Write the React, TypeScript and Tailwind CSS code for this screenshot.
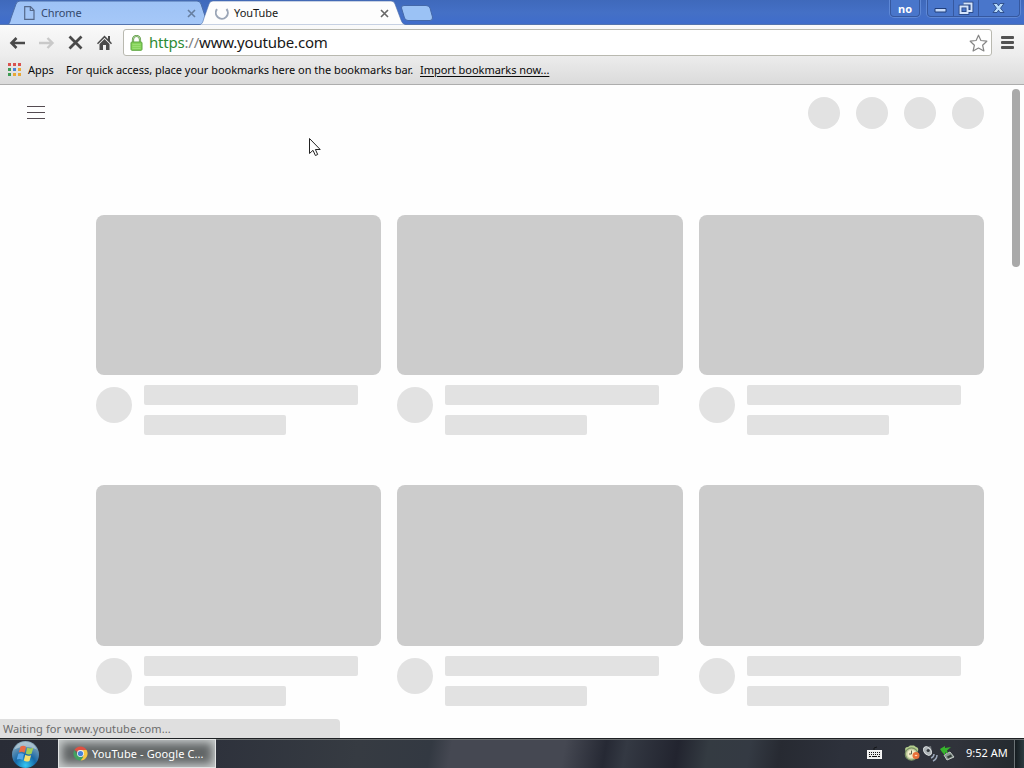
import type { ReactNode } from 'react'

const bookmarksHint = 'For quick access, place your bookmarks here on the bookmarks bar.'

const appDots = [
  'bg-[#d9534f]', 'bg-[#d9534f]', 'bg-[#d9534f]',
  'bg-[#3f9b54]', 'bg-[#4a82d8]', 'bg-[#e8a838]',
  'bg-[#3f9b54]', 'bg-[#e8a838]', 'bg-[#e8a838]',
]

function CloseIcon({ className }: { className: string }) {
  return (
    <svg width="9" height="9" viewBox="0 0 9 9" className={className}>
      <path d="M1 1l7 7M8 1l-7 7" stroke="currentColor" strokeWidth="1.600" fill="none" />
    </svg>
  )
}

function TabStrip() {
  return (
    <div className="relative flex h-[25px] shrink-0 bg-linear-to-b from-[#3f69bb] via-[#4470c6] to-[#3f6ccb]">
      <svg width="1024" height="25" viewBox="0 0 1024 25" className="absolute left-0 top-0">
        <defs>
          <linearGradient id="idle" x1="0" y1="0" x2="0" y2="1">
            <stop offset="0" stopColor="#9dc2f5" />
            <stop offset="1" stopColor="#a6c8f8" />
          </linearGradient>
        </defs>
        <path d="M7 25C10 24 10 21 11 18L16 4Q17 1 20 1H197Q200 1 201 4L208 25Z" fill="url(#idle)" stroke="#4b6da8" strokeWidth="1" />
        <path d="M0 24.5H1024" stroke="#5474ae" />
        <path d="M199 25C203 24 203 21 204 18L209 4Q210 1 213 1H391Q394 1 395 4L401 20Q402 24 406 25Z" fill="#fdfdfd" stroke="#4b6da8" strokeWidth=".6" />
        <path d="M401.500 8Q401 5.500 404 5.500H426Q429 5.500 430 8L432.500 17Q433 20.500 430 20.500H408Q405.500 20.500 404.500 18Z" fill="#9bc2f5" stroke="#4468a9" />
      </svg>

      <div className="relative flex w-[204px] items-center pl-[24px] pr-[8px] pt-px">
        <svg width="11" height="14" viewBox="0 0 11 14">
          <path d="M.7.7h5.800L10 4.300v9H.7zM6.300.7v3.800H10" fill="none" stroke="#55698b" strokeWidth="1.200" />
        </svg>
        <span className="ml-[6px] flex-1 text-[11px] tracking-[-0.1px] text-[#34496c]">Chrome</span>
        <CloseIcon className="text-[#667e9f]" />
      </div>
      <div className="relative flex w-[197px] items-center pl-[11px] pr-[12px] pt-px">
        <svg width="14" height="14" viewBox="0 0 14 14">
          <path d="M2 3.200A6 6 0 1 0 11.500 3" fill="none" stroke="#9ba6b7" strokeWidth="2" />
        </svg>
        <span className="ml-[5px] flex-1 text-[11px] tracking-[-0.03px] text-[#181818]">YouTube</span>
        <CloseIcon className="text-[#666]" />
      </div>

      <div className="relative ml-auto mr-[4px] flex h-[17px] text-white">
        <div className="mr-[7px] flex w-[30px] items-center justify-center rounded-b-[4px] border border-t-0 border-[#36589f] bg-[#4976cb] pt-px text-[11px] font-bold leading-none shadow-[0_0_0_1px_#5e88d6]">no</div>
        <div className="flex w-[93px] rounded-b-[4px] border border-t-0 border-[#36589f] bg-[#4976cb] shadow-[0_0_0_1px_#5e88d6]">
          <WindowButton className="w-[25px]">
            <path d="M7 8.500h11v3.500h-11z" fill="#c8dcfb" stroke="#213f7b" />
          </WindowButton>
          <WindowButton className="w-[26px] border-x border-[#36589f]">
            <path d="M9.500 3.500h8v7.500h-3M6.500 6.500h7v6.500h-7z" fill="none" stroke="#213f7b" strokeWidth="3.600" />
            <path d="M9.500 3.500h8v7.500h-3M6.500 6.500h7v6.500h-7z" fill="none" stroke="#d4e4fc" strokeWidth="2" />
          </WindowButton>
          <WindowButton className="w-[40px]">
            <path d="M14 3.500h4l1.500 2.300L21 3.500h4l-3.500 4.700L25 12.500h-4l-1.500-2.300L18 12.500h-4l3.500-4.300z" fill="#b9dcfb" stroke="#213f7b" strokeWidth=".8" />
          </WindowButton>
        </div>
      </div>
    </div>
  )
}

function WindowButton({ className, children }: { className: string; children: ReactNode }) {
  return (
    <div className={className}>
      <svg width="100%" height="16">{children}</svg>
    </div>
  )
}

function Toolbar() {
  return (
    <div className="flex h-[34px] shrink-0 items-center pl-[9px] pr-[10px] pt-px">
      <svg width="17" height="14" viewBox="0 0 17 14" className="text-[#4a4a4a]">
        <path d="M7.500 2L2.500 7l5 5M3 7h13" fill="none" stroke="currentColor" strokeWidth="2.600" />
      </svg>
      <svg width="17" height="14" viewBox="0 0 17 14" className="ml-[12px] text-[#c9c9c9]">
        <path d="M9.500 2l5 5-5 5M14 7H1" fill="none" stroke="currentColor" strokeWidth="2.400" />
      </svg>
      <svg width="15" height="15" viewBox="0 0 15 15" className="ml-[13px] text-[#4a4a4a]">
        <path d="M1.500 1.500l12 12M13.500 1.500l-12 12" fill="none" stroke="currentColor" strokeWidth="2.800" />
      </svg>
      <svg width="15" height="15" viewBox="0 0 15 15" className="ml-[14px] text-[#4a4a4a]">
        <path d="M7.500.5L11 4V1h2v5l2 2.200-1 1-6.500-6.500L1 9.200l-1-1z" fill="currentColor" />
        <path d="M2.500 9l5-5 5 5v6H9v-5H6v5H2.500z" fill="currentColor" />
      </svg>
      <div className="ml-[11px] flex h-[27px] w-[869px] shrink-0 items-center rounded-[3px] border border-[#b9b9b0] bg-white pl-[6px] pr-[3px]">
        <svg width="13" height="16" viewBox="0 0 13 16">
          <path d="M3 7.500V4.500a3.500 3.500 0 0 1 7 0v3" fill="none" stroke="#5f9b45" strokeWidth="2.200" />
          <path d="M3 7.500V4.500a3.500 3.500 0 0 1 7 0v3" fill="none" stroke="#c3dfb5" strokeWidth=".7" />
          <rect x="1" y="7" width="11" height="8.300" rx="1" fill="#86d45a" stroke="#5da640" />
          <path d="M2.500 9.500h8M2.500 11.500h8M2.500 13.500h8" stroke="#a3e37f" strokeWidth=".7" />
        </svg>
        <div className="ml-[6px] flex-1 whitespace-pre text-[15px] leading-none tracking-[-0.2px] text-[#181818]">
          <span className="text-[#2e8b35]">https</span>
          <span className="text-[#808080]">://</span>www.youtube.com
        </div>
        <svg width="19" height="18" viewBox="0 0 19 18">
          <path d="M9.500 1.200l2.400 5.300 5.900.7-4.200 4 1.300 5.800-5.400-3-5.400 3 1.300-5.800-4.200-4 5.900-.7z" fill="#fff" stroke="#858585" strokeWidth="1.200" strokeLinejoin="round" />
        </svg>
      </div>
      <div className="ml-auto flex flex-col gap-[2px]">
        <div className="h-[3px] w-[13px] rounded-[1px] bg-[#525252]" />
        <div className="h-[3px] w-[13px] rounded-[1px] bg-[#525252]" />
        <div className="h-[3px] w-[13px] rounded-[1px] bg-[#525252]" />
      </div>
    </div>
  )
}

function BookmarksBar() {
  return (
    <div className="flex h-[26px] shrink-0 items-center border-b border-[#adadad] pb-[3px] pl-[8px] text-[11px] tracking-[-0.03px] text-[#0a0a0a]">
      <div className="grid grid-cols-3 gap-[2px] pb-[2px]">
        {appDots.map((color, i) => (
          <div key={i} className={`size-[3px] ${color}`} />
        ))}
      </div>
      <span className="ml-[7px] w-[38px]">Apps</span>
      <span className="w-[354px] whitespace-nowrap">{bookmarksHint}</span>
      <span className="underline underline-offset-2">Import bookmarks now...</span>
    </div>
  )
}

function VideoSkeleton() {
  return (
    <div className="h-[270.400px]">
      <div className="h-[160.400px] rounded-[8px] bg-[#ccc]" />
      <div className="flex pt-[10px]">
        <div className="mr-[12px] mt-[2px] size-[36px] shrink-0 rounded-full bg-[#e2e2e2]" />
        <div className="flex flex-1 flex-col gap-[10px]">
          <div className="h-[20px] w-[214px] rounded-[2px] bg-[#e2e2e2]" />
          <div className="h-[20px] w-[142px] rounded-[2px] bg-[#e2e2e2]" />
        </div>
      </div>
    </div>
  )
}

function Page() {
  return (
    <div className="relative min-h-0 flex-1 overflow-hidden bg-[#fefefe]">
      <div className="flex h-[56px] items-center justify-between pl-[27px] pr-[40px]">
        <div className="flex flex-col gap-[5px] pb-[2px]">
          <div className="h-px w-[18px] bg-[#544b51]" />
          <div className="h-px w-[18px] bg-[#544b51]" />
          <div className="h-px w-[18px] bg-[#544b51]" />
        </div>
        <div className="flex gap-4">
          {[0, 1, 2, 3].map((n) => (
            <div key={n} className="size-8 rounded-full bg-[#e2e2e2]" />
          ))}
        </div>
      </div>
      <div className="grid grid-cols-3 gap-x-4 pl-[96px] pr-[40px] pt-[74px]">
        {[0, 1, 2, 3, 4, 5].map((n) => (
          <VideoSkeleton key={n} />
        ))}
      </div>

      <div className="absolute right-[4px] top-[4px] h-[178px] w-[8px] rounded-full bg-[#a9a9a9]" />
      <svg width="14" height="21" viewBox="0 0 14 21" className="absolute left-[309px] top-[53px]">
        <path d="M.5.5v15l3.500-3.200 2.400 5.200 2.300-1-2.300-5h4.800z" fill="#fff" stroke="#222" />
      </svg>
      <div className="absolute bottom-0 left-0 flex h-[19px] w-[340px] items-center rounded-tr-[4px] bg-[#dfdfdf] pl-[3px] pt-[2px] text-[11px] tracking-[0.08px] text-[#6c6c6c]">
        Waiting for www.youtube.com...
      </div>
    </div>
  )
}

function Taskbar() {
  return (
    <div className="flex h-[30px] shrink-0 items-center border-t border-[#1e2124] bg-[linear-gradient(100deg,#292c36_0%,#2e323c_21%,#363b42_35%,#333942_42%,#454852_44%,#454852_55%,#262934_59%,#343943_61%,#22242f_66%,#343b42_69%,#343a43_73%,#272a32_76%,#2d313b_82%,#30333b_93%,#22282c_100%)] text-[11px] text-white shadow-[inset_0_1px_0_#6c7071]">
      <svg width="30" height="29" viewBox="0 0 30 29" className="ml-[10px]">
        <defs>
          <radialGradient id="orb" cx=".5" cy=".9" r=".85">
            <stop offset="0" stopColor="#35c8f4" />
            <stop offset=".45" stopColor="#1768a7" />
            <stop offset="1" stopColor="#8ba9bb" />
          </radialGradient>
        </defs>
        <circle cx="15.500" cy="15.500" r="13.500" fill="url(#orb)" />
        <path d="M4 10.500a12.500 12.500 0 0 1 23 0Q15 5 4 10.500" fill="#c6d7df" opacity=".6" />
        <path d="M10.500 7.500q3-1.500 5.500.3l-1.500 6q-2.800-1.700-5.700-.3z" fill="#e96b46" />
        <path d="M17.300 8.500q2.800 1.700 6 .3l-1.700 6q-3 1.400-5.800-.4z" fill="#a3cf55" />
        <path d="M8.300 14.800q3-1.400 5.700.3l-1.500 5.800q-2.700-1.700-5.800-.3z" fill="#55a6e8" />
        <path d="M15.300 15.800q2.900 1.700 5.800.4l-1.600 5.700q-3 1.400-5.700-.3z" fill="#fae06b" />
      </svg>
      <div className="ml-[18px] flex h-[29px] w-[158px] items-center border border-[#e2e4e4] bg-[#626667] pl-[14px] shadow-[inset_0_0_9px_3px_#c8cccc]">
        <svg width="15" height="15" viewBox="0 0 16 16">
          <path d="M8 8L1.500 4.250A7.500 7.500 0 0 1 14.500 4.250H8z" fill="#df5142" />
          <path d="M8 8V4.250h6.500A7.500 7.500 0 0 1 8 15.500l3.250-5.600z" fill="#f5c642" />
          <path d="M8 15.500A7.500 7.500 0 0 1 1.500 4.250L4.750 9.900 8 11.500l3 .2z" fill="#43a160" />
          <circle cx="8" cy="8" r="3.700" fill="#f1f3f4" />
          <circle cx="8" cy="8" r="2.800" fill="#4582db" />
        </svg>
        <span className="ml-[4px] whitespace-nowrap pt-px tracking-[0.1px]">YouTube - Google C...</span>
      </div>

      <div className="ml-auto flex items-center">
        <svg width="15" height="13" viewBox="0 0 15 13" className="-mt-[3px]">
          <path d="M7 4.500V2l3-1" fill="none" stroke="#151719" />
          <rect x=".5" y="4.500" width="14" height="8" fill="#ededed" stroke="#f5f5f5" />
          <path d="M2 6.500h11M2 8.500h11" stroke="#111" strokeDasharray="1 1" />
          <path d="M2 10.500h2M5 10.500h5M11 10.500h2" stroke="#111" />
        </svg>
        <svg width="16" height="17" viewBox="0 0 16 17" className="ml-[22px]">
          <path d="M1.500 6Q0 2 4 2l2-1.500h4L12 2q3 .5 2 4" fill="#b4cf8e" />
          <circle cx="7.500" cy="9" r="6.200" fill="#c5cea1" stroke="#789063" strokeWidth="1.300" />
          <circle cx="7.500" cy="9" r="4" fill="#f1edc9" />
          <path d="M7.500 5.500V9H5" fill="none" stroke="#5c614d" />
          <circle cx="12" cy="10.500" r="3.500" fill="#e9703a" />
          <path d="M10.800 10.500h2.400" stroke="#ffd2ad" strokeWidth="1.200" />
        </svg>
        <svg width="17" height="17" viewBox="0 0 17 17" className="ml-[2px]">
          <path d="M3 2l6-1 1 6-3 3-4-2z" fill="#6d7377" />
          <ellipse cx="5.500" cy="6" rx="3.300" ry="4.800" transform="rotate(-40 5.500 6)" fill="#aeb4b7" stroke="#dce0e1" />
          <circle cx="6.200" cy="5.500" r="1.600" fill="#34393d" />
          <path d="M9 13q3-1 3-4M11 16q4-2 4-6" fill="none" stroke="#9ba7b9" strokeWidth="1.500" />
        </svg>
        <svg width="15" height="17" viewBox="0 0 15 17" className="ml-[1px]">
          <path d="M4 10l6-3 4 5-7 3z" fill="#89958f" stroke="#c3cbc6" />
          <path d="M7 11.500l4-2 1 2-4 2z" fill="#333e39" />
          <path d="M0 4l5-3v2l6-1-4 3.500 1 3-3-1v3L2 7z" fill="#37b52d" />
        </svg>
        <span className="ml-[11px] w-[48px] whitespace-nowrap">9:52 AM</span>
        <div className="h-[28px] w-[10px] border-l border-[#6b7275] bg-linear-to-r from-[#151c20] to-[#2d3b40]" />
      </div>
    </div>
  )
}

export default function App() {
  return (
    <div className="flex h-[768px] w-[1024px] flex-col overflow-hidden bg-white font-['Noto_Sans','Open_Sans',sans-serif]">
      <TabStrip />
      <div className="bg-linear-to-b from-[#fafafa] via-[#ededed] to-[#dadada]">
        <Toolbar />
        <BookmarksBar />
      </div>
      <Page />
      <Taskbar />
    </div>
  )
}
